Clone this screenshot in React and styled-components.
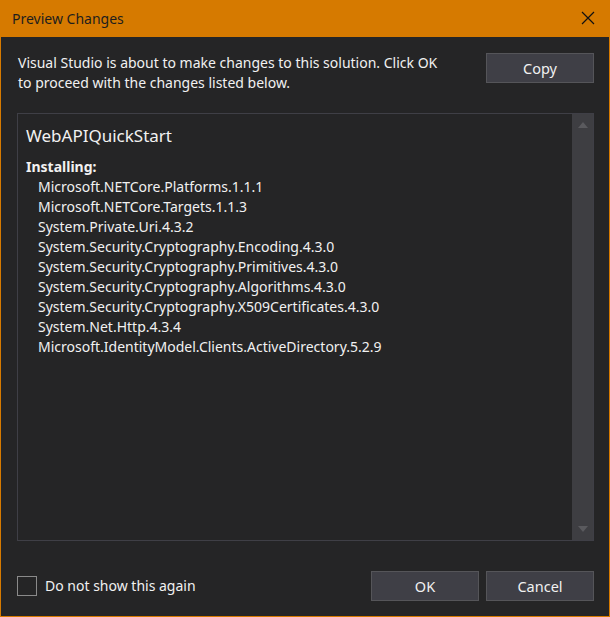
import React from "react";
import styled, { createGlobalStyle } from "styled-components";

const Global = createGlobalStyle`
  html, body { margin: 0; padding: 0; background: #252526; }
  * { box-sizing: border-box; }
`;

const Window = styled.div`
  width: 610px;
  height: 617px;
  display: flex;
  flex-direction: column;
  background: #252526;
  border: 1px solid #d67a00;
  border-top: none;
  font-family: "Noto Sans", "Open Sans", sans-serif;
  color: #f1f1f1;
`;

const TitleBar = styled.div`
  height: 37px;
  margin: 0 -1px;
  background: #d67a00;
  display: flex;
  align-items: center;
  justify-content: space-between;
  padding: 0 15px 0 12px;
  color: #1e1e1e;
  font-size: 14px;
`;

const CloseButton = styled.div`
  width: 14px;
  height: 14px;
  display: flex;
  margin-top: -1px;
`;

const Body = styled.div`
  flex: 1;
  display: flex;
  flex-direction: column;
  padding: 16px 15px 15px 16px;
  min-height: 0;
`;

const Header = styled.div`
  display: flex;
  justify-content: space-between;
  align-items: flex-start;
`;

const Message = styled.p`
  margin: 0 0 0 1px;
  font-size: 14px;
  line-height: 20px;
  width: 428px;
`;

const Button = styled.button`
  width: 108px;
  height: 30px;
  background: #3f3f46;
  border: 1px solid #555559;
  color: #f1f1f1;
  font-family: inherit;
  font-size: 14.5px;
  padding: 0;
  cursor: default;
`;

const ListBox = styled.div`
  margin-top: 20px;
  flex: 1;
  display: flex;
  border: 1px solid #3f3f46;
  min-height: 0;
`;

const ListContent = styled.div`
  flex: 1;
  padding: 10px 8px;
`;

const ProjectName = styled.div`
  font-size: 17px;
  line-height: 24px;
  margin-bottom: 9px;
`;

const SectionTitle = styled.div`
  font-weight: bold;
  font-size: 14px;
  line-height: 20px;
`;

const Item = styled.div`
  font-size: 14px;
  line-height: 20px;
  padding-left: 12px;
`;

const Scrollbar = styled.div`
  width: 21px;
  background: #3e3e42;
  display: flex;
  flex-direction: column;
  justify-content: space-between;
  align-items: center;
  padding: 8px 0;
`;

const Arrow = styled.div`
  width: 0;
  height: 0;
  border-left: 5px solid transparent;
  border-right: 5px solid transparent;
  ${(p) =>
    p.$down
      ? "border-top: 6px solid #5a5a5e;"
      : "border-bottom: 6px solid #5a5a5e;"}
`;

const Footer = styled.div`
  margin-top: 30px;
  display: flex;
  align-items: center;
  justify-content: space-between;
`;

const CheckLabel = styled.label`
  display: flex;
  align-items: center;
  gap: 8px;
  font-size: 14px;
  line-height: 20px;
`;

const CheckBox = styled.span`
  width: 20px;
  height: 20px;
  border: 1px solid #8a8a8a;
  display: inline-block;
`;

const ButtonRow = styled.div`
  display: flex;
  gap: 7px;
`;

const items = [
  "Microsoft.NETCore.Platforms.1.1.1",
  "Microsoft.NETCore.Targets.1.1.3",
  "System.Private.Uri.4.3.2",
  "System.Security.Cryptography.Encoding.4.3.0",
  "System.Security.Cryptography.Primitives.4.3.0",
  "System.Security.Cryptography.Algorithms.4.3.0",
  "System.Security.Cryptography.X509Certificates.4.3.0",
  "System.Net.Http.4.3.4",
  "Microsoft.IdentityModel.Clients.ActiveDirectory.5.2.9",
];

export default function App() {
  return (
    <>
      <Global />
      <Window>
        <TitleBar>
          <span>Preview Changes</span>
          <CloseButton>
            <svg width="14" height="14" viewBox="0 0 14 14">
              <path d="M1 1 L13 13 M13 1 L1 13" stroke="#111" strokeWidth="1.2" fill="none" />
            </svg>
          </CloseButton>
        </TitleBar>
        <Body>
          <Header>
            <Message>
              Visual Studio is about to make changes to this solution. Click OK
              to proceed with the changes listed below.
            </Message>
            <Button>Copy</Button>
          </Header>
          <ListBox>
            <ListContent>
              <ProjectName>WebAPIQuickStart</ProjectName>
              <SectionTitle>Installing:</SectionTitle>
              {items.map((it) => (
                <Item key={it}>{it}</Item>
              ))}
            </ListContent>
            <Scrollbar>
              <Arrow />
              <Arrow $down />
            </Scrollbar>
          </ListBox>
          <Footer>
            <CheckLabel>
              <CheckBox />
              Do not show this again
            </CheckLabel>
            <ButtonRow>
              <Button>OK</Button>
              <Button>Cancel</Button>
            </ButtonRow>
          </Footer>
        </Body>
      </Window>
    </>
  );
}
